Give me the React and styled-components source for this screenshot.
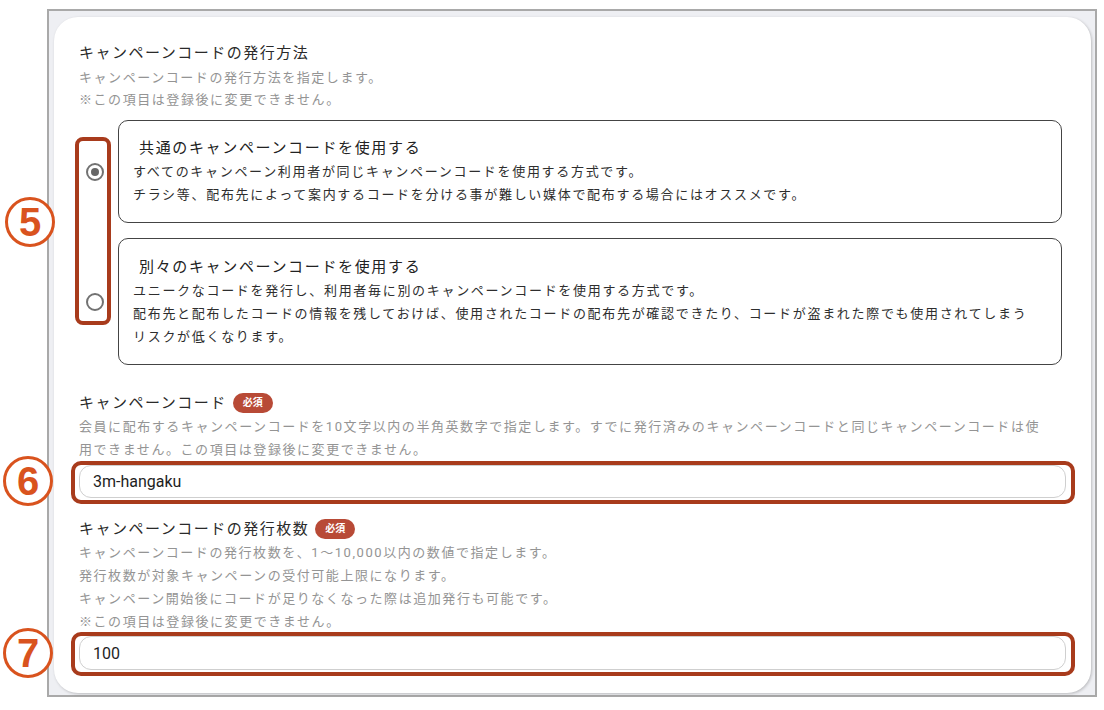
import styled, { createGlobalStyle } from "styled-components";

const GlobalStyle = createGlobalStyle`
  body {
    margin: 0;
    background: #ffffff;
    font-family: Roboto, "Noto Sans CJK JP", sans-serif;
  }
`;

const Page = styled.div`
  padding: 9px 7px 0 47px;
`;

const Frame = styled.div`
  height: 688px;
  box-sizing: border-box;
  border: 2px solid #a9a9a9;
  background: #eeeff3;
  padding: 6px 4px 2px 5px;
`;

const Card = styled.div`
  background: #ffffff;
  border-radius: 24px;
  box-shadow: 1px 1px 3px rgba(0, 0, 0, 0.22);
  padding: 24px 25px 23px 25px;
`;

const Label = styled.div`
  font-size: 15px;
  line-height: 24px;
  color: #2a2a2a;
  letter-spacing: 0.1em;
  margin-top: ${(props) => props.$mt || 0}px;
  display: flex;
  align-items: center;
`;

const Badge = styled.span`
  display: inline-flex;
  align-items: center;
  height: 20px;
  padding: 0 10px;
  margin-left: 6px;
  border-radius: 10px;
  background: #b84a36;
  color: #fff;
  font-size: 10px;
  font-weight: 700;
  letter-spacing: 0;
`;

const Help = styled.div`
  font-size: 13px;
  line-height: ${(props) => props.$lh || 23}px;
  color: #949494;
  letter-spacing: 0.12em;
  margin-top: ${(props) => props.$mt || 0}px;
`;

const Options = styled.div`
  position: relative;
  margin-top: 9px;
  padding-right: 4px;
  display: flex;
  flex-direction: column;
  gap: 15px;
`;

const OptionRow = styled.div`
  display: flex;
  align-items: center;
`;

const RadioCell = styled.div`
  width: 39px;
  padding-left: 7px;
  box-sizing: border-box;
`;

const Radio = styled.span`
  display: flex;
  align-items: center;
  justify-content: center;
  width: 18px;
  height: 18px;
  box-sizing: border-box;
  border: 2px solid #727272;
  border-radius: 50%;

  &::after {
    content: "";
    width: 8px;
    height: 8px;
    border-radius: 50%;
    background: ${(props) => (props.$checked ? "#666" : "transparent")};
  }
`;

const OptionCard = styled.div`
  flex: 1;
  border: 1px solid #444;
  border-radius: 10px;
  padding: ${(props) => props.$pt}px 14px 16px 14px;
`;

const OptionTitle = styled.div`
  font-size: 15px;
  line-height: 24px;
  color: #222;
  letter-spacing: 0.11em;
  padding-left: 6px;
`;

const OptionText = styled.div`
  font-size: 13px;
  line-height: 23px;
  color: #2e2e2e;
  letter-spacing: 0.13em;
`;

const Highlight = styled.div`
  position: absolute;
  border: 4px solid #a83b1c;
  border-radius: 8px;
  pointer-events: none;
`;

const RadioHighlight = styled(Highlight)`
  left: -4px;
  top: 17px;
  width: 36px;
  height: 188px;
  box-sizing: border-box;
`;

const FieldHighlight = styled(Highlight)`
  left: -8px;
  top: -4px;
  right: -9px;
  bottom: -6px;
  border-radius: 10px;
`;

const Marker = styled.div`
  position: absolute;
  left: ${(props) => props.$left}px;
  top: ${(props) => props.$top}px;
  width: 50px;
  height: 50px;
  box-sizing: border-box;
  border: 3px solid #d9531e;
  border-radius: 50%;
  background: #fff;
  color: #d9531e;
  display: flex;
  align-items: center;
  justify-content: center;
  font-family: "Liberation Sans", Arial, sans-serif;
  font-weight: 700;
  font-size: 40px;
  line-height: 1;
`;

const Field = styled.div`
  position: relative;
  margin-top: ${(props) => props.$mt}px;
`;

const Input = styled.input`
  display: block;
  width: 100%;
  height: ${(props) => props.$h}px;
  box-sizing: border-box;
  border: 1px solid #cfcfcf;
  border-radius: 12px;
  padding: 0 13px;
  font-family: Roboto, "Noto Sans CJK JP", sans-serif;
  font-size: 16px;
  color: #1e1e1e;
  background: #fff;
  outline: none;
`;

const options = [
  {
    title: "共通のキャンペーンコードを使用する",
    checked: true,
    pt: 15,
    lines: [
      "すべてのキャンペーン利用者が同じキャンペーンコードを使用する方式です。",
      "チラシ等、配布先によって案内するコードを分ける事が難しい媒体で配布する場合にはオススメです。",
    ],
  },
  {
    title: "別々のキャンペーンコードを使用する",
    checked: false,
    pt: 16,
    lines: [
      "ユニークなコードを発行し、利用者毎に別のキャンペーンコードを使用する方式です。",
      "配布先と配布したコードの情報を残しておけば、使用されたコードの配布先が確認できたり、コードが盗まれた際でも使用されてしまう",
      "リスクが低くなります。",
    ],
  },
];

const App = () => {
  return (
    <Page>
      <GlobalStyle />
      <Frame>
        <Card>
          <Label>キャンペーンコードの発行方法</Label>
          <Help $mt={2} $lh={22}>
            キャンペーンコードの発行方法を指定します。
            <br />
            ※この項目は登録後に変更できません。
          </Help>

          <Options>
            {options.map((opt) => (
              <OptionRow key={opt.title}>
                <RadioCell>
                  <Radio $checked={opt.checked} />
                </RadioCell>
                <OptionCard $pt={opt.pt}>
                  <OptionTitle>{opt.title}</OptionTitle>
                  {opt.lines.map((line) => (
                    <OptionText key={line}>{line}</OptionText>
                  ))}
                </OptionCard>
              </OptionRow>
            ))}
            <RadioHighlight />
            <Marker $left={-74} $top={77}>5</Marker>
          </Options>

          <Label $mt={26}>
            キャンペーンコード<Badge>必須</Badge>
          </Label>
          <Help>
            会員に配布するキャンペーンコードを10文字以内の半角英数字で指定します。すでに発行済みのキャンペーンコードと同じキャンペーンコードは使
            <br />
            用できません。この項目は登録後に変更できません。
          </Help>
          <Field $mt={4}>
            <Input $h={33} defaultValue="3m-hangaku" />
            <FieldHighlight />
            <Marker $left={-76} $top={-9}>6</Marker>
          </Field>

          <Label $mt={19}>
            キャンペーンコードの発行枚数<Badge>必須</Badge>
          </Label>
          <Help>
            キャンペーンコードの発行枚数を、1〜10,000以内の数値で指定します。
            <br />
            発行枚数が対象キャンペーンの受付可能上限になります。
            <br />
            キャンペーン開始後にコードが足りなくなった際は追加発行も可能です。
            <br />
            ※この項目は登録後に変更できません。
          </Help>
          <Field $mt={3}>
            <Input $h={34} defaultValue="100" />
            <FieldHighlight />
            <Marker $left={-76} $top={-8}>7</Marker>
          </Field>
        </Card>
      </Frame>
    </Page>
  );
};

export default App;
